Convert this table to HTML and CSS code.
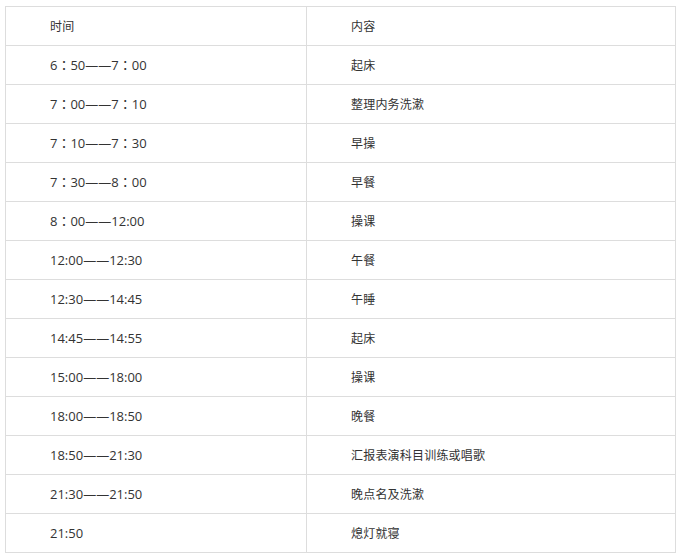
FILE: index.html
```html
<!DOCTYPE html>
<html lang="zh">
<head>
<meta charset="utf-8">
<title>作息时间表</title>
<link rel="stylesheet" href="styles.css">
</head>
<body>
<table class="schedule">
  <tbody>
    <tr><td>时间</td><td>内容</td></tr>
    <tr><td class="time">6：50——7：00</td><td>起床</td></tr>
    <tr><td class="time">7：00——7：10</td><td>整理内务洗漱</td></tr>
    <tr><td class="time">7：10——7：30</td><td>早操</td></tr>
    <tr><td class="time">7：30——8：00</td><td>早餐</td></tr>
    <tr><td class="time">8：00——12:00</td><td>操课</td></tr>
    <tr><td class="time">12:00——12:30</td><td>午餐</td></tr>
    <tr><td class="time">12:30——14:45</td><td>午睡</td></tr>
    <tr><td class="time">14:45——14:55</td><td>起床</td></tr>
    <tr><td class="time">15:00——18:00</td><td>操课</td></tr>
    <tr><td class="time">18:00——18:50</td><td>晚餐</td></tr>
    <tr><td class="time">18:50——21:30</td><td>汇报表演科目训练或唱歌</td></tr>
    <tr><td class="time">21:30——21:50</td><td>晚点名及洗漱</td></tr>
    <tr><td class="time">21:50</td><td>熄灯就寝</td></tr>
  </tbody>
</table>
</body>
</html>
```
FILE: styles.css
```css
html, body {
  margin: 0;
  padding: 0;
  background: #fff;
}
body {
  padding: 6px 0 0 5px;
  font-family: "Microsoft YaHei", "Noto Sans CJK SC", sans-serif;
  font-size: 12px;
  color: #333;
}
.schedule {
  border-collapse: collapse;
  width: 671px;
}
.schedule td {
  border: 1px solid #ddd;
  height: 39px;
  padding: 0 0 1px 44px;
  box-sizing: border-box;
  vertical-align: middle;
  line-height: 16px;
  letter-spacing: 0.2px;
}
.schedule td:first-child {
  width: 301px;
}
.schedule td.time {
  font-family: "Open Sans", "Noto Sans CJK TC", sans-serif;
  font-size: 13px;
  letter-spacing: 0;
}
```
